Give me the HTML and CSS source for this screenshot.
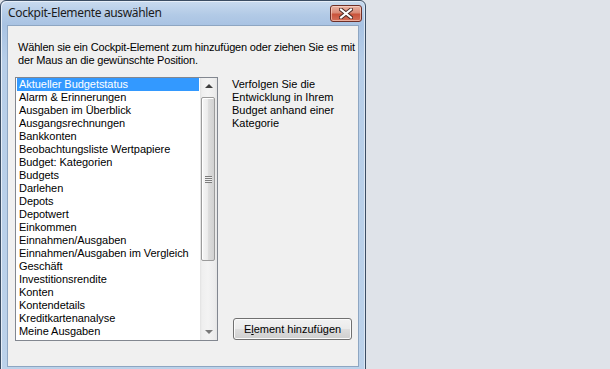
FILE: index.html
```html
<!DOCTYPE html>
<html lang="de">
<head>
<meta charset="utf-8">
<title>Cockpit-Elemente auswählen</title>
<link rel="stylesheet" href="styles.css">
</head>
<body>
<div class="window">
  <div class="titlebar">
    <span class="title">Cockpit-Elemente auswählen</span>
    <button class="close" aria-label="Schließen">
      <svg width="14" height="11" viewBox="0 0 14 11">
        <path d="M2 1.5 L12 9.5 M12 1.5 L2 9.5" stroke="#4a2a26" stroke-width="4" stroke-linecap="square"/>
        <path d="M2 1.5 L12 9.5 M12 1.5 L2 9.5" stroke="#ffffff" stroke-width="2" stroke-linecap="square"/>
      </svg>
    </button>
  </div>
  <div class="client">
    <p class="intro">Wählen sie ein Cockpit-Element zum hinzufügen oder ziehen Sie es mit<br>der Maus an die gewünschte Position.</p>
    <div class="main">
      <div class="listbox">
        <ul class="items">
          <li class="selected">Aktueller Budgetstatus</li>
          <li>Alarm &amp; Erinnerungen</li>
          <li>Ausgaben im Überblick</li>
          <li>Ausgangsrechnungen</li>
          <li>Bankkonten</li>
          <li>Beobachtungsliste Wertpapiere</li>
          <li>Budget: Kategorien</li>
          <li>Budgets</li>
          <li>Darlehen</li>
          <li>Depots</li>
          <li>Depotwert</li>
          <li>Einkommen</li>
          <li>Einnahmen/Ausgaben</li>
          <li>Einnahmen/Ausgaben im Vergleich</li>
          <li>Geschäft</li>
          <li>Investitionsrendite</li>
          <li>Konten</li>
          <li>Kontendetails</li>
          <li>Kreditkartenanalyse</li>
          <li>Meine Ausgaben</li>
        </ul>
        <div class="scrollbar">
          <div class="sb-btn"><span class="arrow-up"></span></div>
          <div class="sb-track">
            <div class="thumb"><span class="grip"></span></div>
          </div>
          <div class="sb-btn"><span class="arrow-down"></span></div>
        </div>
      </div>
      <div class="side">
        <p class="desc">Verfolgen Sie die<br>Entwicklung in Ihrem<br>Budget anhand einer<br>Kategorie</p>
        <button class="add">E<u>l</u>ement hinzufügen</button>
      </div>
    </div>
  </div>
</div>
</body>
</html>
```
FILE: styles.css
```css
html, body {
  margin: 0;
  padding: 0;
}
body {
  background: #dfe3e9;
  font-family: "Liberation Sans", Arial, sans-serif;
  font-size: 11px;
  color: #000;
  overflow: hidden;
  height: 369px;
}
.window {
  box-sizing: border-box;
  width: 366px;
  height: 375px;
  border: 1px solid #3b4d63;
  border-radius: 6px 6px 0 0;
  padding: 0 6px 6px 6px;
  background: linear-gradient(to bottom, #c9dbef 0, #b2cae6 14px, #a9c3e3 24px, #b7cee8 60px, #bcd2ea 100%);
  box-shadow: inset 1px 1px 0 #e6eef8, inset -1px 0 0 #dbe6f3;
}
.titlebar {
  height: 24px;
  display: flex;
  align-items: flex-start;
  justify-content: space-between;
}
.title {
  font-family: "Noto Sans", "Open Sans", sans-serif;
  font-size: 12px;
  line-height: 16px;
  letter-spacing: -0.35px;
  padding: 4px 0 0 1px;
  color: #1b1b1b;
}
.close {
  box-sizing: border-box;
  width: 32px;
  height: 17px;
  margin: 4px -3px 0 0;
  padding: 0;
  border: 1px solid #6e2f27;
  border-radius: 3px;
  background: linear-gradient(to bottom, #e9b3a5 0, #d98a76 45%, #c9533b 55%, #d3705a 100%);
  box-shadow: inset 0 0 0 1px rgba(255, 225, 215, 0.55);
  display: flex;
  align-items: center;
  justify-content: center;
}
.client {
  box-sizing: border-box;
  height: 342px;
  background: #f0f0f0;
  border: 1px solid #8ea6c2;
  padding: 15px 0 0 0;
}
.intro {
  margin: 0 0 10px 10px;
  line-height: 13px;
  white-space: nowrap;
  letter-spacing: -0.17px;
}
.main {
  display: flex;
  padding-left: 7px;
}
.listbox {
  box-sizing: border-box;
  width: 203px;
  height: 264px;
  border: 1px solid #828790;
  background: #fff;
  display: flex;
}
.items {
  list-style: none;
  margin: 0;
  padding: 0 1px;
  width: 183px;
}
.items li {
  height: 13px;
  line-height: 13px;
  padding-left: 2px;
  white-space: nowrap;
  letter-spacing: -0.05px;
}
.items li.selected {
  background: #3399ff;
  color: #fff;
}
.scrollbar {
  width: 17px;
  display: flex;
  flex-direction: column;
  background: linear-gradient(to right, #e2e2e2 0, #efefef 2px, #f3f3f3 8px, #ececec 15px, #e4e4e4 17px);
}
.sb-btn {
  height: 17px;
  display: flex;
  align-items: center;
  justify-content: center;
}
.arrow-up {
  width: 0;
  height: 0;
  border-left: 4px solid transparent;
  border-right: 4px solid transparent;
  border-bottom: 4px solid #3f3f3f;
  margin: 0 0 1px 1px;
}
.arrow-down {
  width: 0;
  height: 0;
  border-left: 4px solid transparent;
  border-right: 4px solid transparent;
  border-top: 4px solid #7a7a7a;
  margin: 1px 0 0 1px;
}
.sb-track {
  flex: 1;
  padding: 2px 2px 0 1px;
}
.thumb {
  box-sizing: border-box;
  height: 164px;
  border: 1px solid #9b9b9b;
  border-radius: 2px;
  background: linear-gradient(to right, #f6f6f6 0, #ececec 45%, #dcdcdc 55%, #d2d2d2 100%);
  box-shadow: inset 1px 1px 0 #fff;
  display: flex;
  align-items: center;
  justify-content: center;
}
.grip {
  width: 7px;
  height: 7px;
  background: repeating-linear-gradient(to bottom, #7c7c7c 0, #7c7c7c 1px, #eeeeee 1px, #eeeeee 2px);
}
.side {
  display: flex;
  flex-direction: column;
  justify-content: space-between;
  align-items: flex-start;
  margin-left: 14px;
  padding-bottom: 1px;
}
.desc {
  margin: 1px 0 0 0;
  line-height: 13px;
}
.add {
  box-sizing: border-box;
  width: 119px;
  height: 22px;
  margin-left: 1px;
  padding: 0;
  border: 1px solid #707070;
  border-radius: 3px;
  background: linear-gradient(to bottom, #f2f2f2 0, #ebebeb 48%, #dddddd 52%, #cfcfcf 100%);
  box-shadow: inset 0 0 0 1px #fbfbfb;
  font-family: "Liberation Sans", Arial, sans-serif;
  font-size: 11px;
  color: #000;
}
.add u {
  text-decoration: underline;
}
```
